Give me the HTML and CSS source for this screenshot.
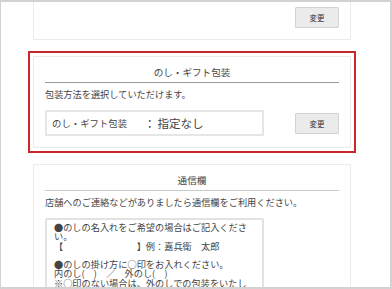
FILE: index.html
```html
<!DOCTYPE html>
<html lang="ja">
<head>
    <meta charset="UTF-8">
    <meta name="viewport" content="width=device-width, initial-scale=1.0">
    <title>ご注文手続き - のし・ギフト包装</title>
    <link rel="stylesheet" href="styles.css">
</head>
<body>
    <div class="frame">
        <div class="card card-cut">
            <div class="card-foot">
                <button type="button" class="btn">変更</button>
            </div>
        </div>

        <section class="card card-active">
            <h2 class="card-title">のし・ギフト包装</h2>
            <p class="card-text">包装方法を選択していただけます。</p>
            <div class="choice-row">
                <div class="choice-box">
                    <span class="choice-label">のし・ギフト包装</span>
                    <span class="choice-sep">：</span>
                    <span class="choice-value">指定なし</span>
                </div>
                <button type="button" class="btn">変更</button>
            </div>
        </section>

        <section class="card">
            <h2 class="card-title card-title-light">通信欄</h2>
            <p class="card-text">店舗へのご連絡などがありましたら通信欄をご利用ください。</p>
            <textarea class="memo" id="memo">●のしの名入れをご希望の場合はご記入ください。
【　　　　　　　　】例：嘉兵衛　太郎

●のしの掛け方に○印をお入れください。
内のし(　)　／　外のし(　)
※○印のない場合は、外のしでの包装をいたします。</textarea>
        </section>
    </div>
</body>
</html>
```

FILE: styles.css
```css
body {
    margin: 0;
    font-family: "Noto Sans CJK JP", sans-serif;
    color: #333;
    background-color: #fff;
}
.frame {
    width: 392px;
    height: 289px;
    box-sizing: border-box;
    border: 2px solid #d2d2d2;
    border-left-width: 1px;
    overflow: hidden;
}
.card {
    width: 318px;
    box-sizing: border-box;
    margin: 0 0 16px 32px;
    padding: 8px 11px 11px;
    border: 1px solid #ebebeb;
    background-color: #fff;
}
.card-cut {
    border-top: none;
    padding-top: 5px;
}
.card-active {
    outline: 2px solid #c9262c;
    outline-offset: 3px;
}
.card-foot {
    display: flex;
    justify-content: flex-end;
}
.card-title {
    margin: 0;
    padding-bottom: 3px;
    border-bottom: 1px solid #9a9a9a;
    font-size: 9.6px;
    font-weight: normal;
    line-height: 14px;
    text-align: center;
    color: #444;
}
.card-title-light {
    border-bottom-color: #cacaca;
}
.card-text {
    margin: 4px 0 9px;
    font-size: 9.2px;
    line-height: 14px;
    color: #444;
}
.btn {
    width: 44px;
    height: 21px;
    padding: 0;
    border: 1px solid #d2d2d2;
    border-radius: 1px;
    background-color: #ebebeb;
    font-family: "Noto Sans CJK JP", sans-serif;
    font-size: 7.5px;
    color: #333;
    cursor: pointer;
}
.choice-row {
    display: flex;
    align-items: center;
    justify-content: space-between;
}
.choice-box {
    display: flex;
    align-items: center;
    width: 219px;
    height: 26px;
    box-sizing: border-box;
    padding: 0 5px;
    border: 2px solid #e6e6e6;
    color: #444;
}
.choice-label {
    width: 92px;
    font-size: 9.4px;
}
.choice-sep {
    margin-right: 2px;
    font-size: 11.5px;
}
.choice-value {
    font-size: 11.5px;
}
.memo {
    display: block;
    width: 219px;
    height: 110px;
    box-sizing: border-box;
    margin: 0;
    padding: 3px 7px;
    border: 2px solid #e2e2e2;
    border-radius: 2px;
    font-family: "Noto Sans CJK JP", sans-serif;
    font-size: 9.2px;
    line-height: 9.3px;
    color: #444;
    resize: none;
    overflow: hidden;
}
```
